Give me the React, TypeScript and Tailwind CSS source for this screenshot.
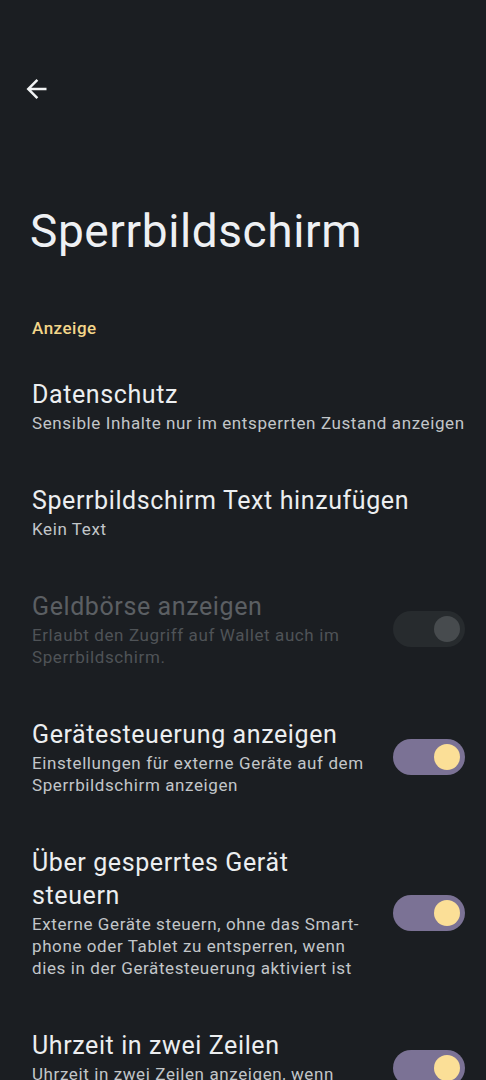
import React from 'react';

type Item = {
  title: string;
  summary: string;
  toggle?: 'on' | 'off';
  disabled?: boolean;
};

const items: Item[] = [
  { title: 'Datenschutz', summary: 'Sensible Inhalte nur im entsperrten Zustand anzeigen' },
  { title: 'Sperrbildschirm Text hinzufügen', summary: 'Kein Text' },
  {
    title: 'Geldbörse anzeigen',
    summary: 'Erlaubt den Zugriff auf Wallet auch im Sperrbildschirm.',
    toggle: 'on',
    disabled: true,
  },
  {
    title: 'Gerätesteuerung anzeigen',
    summary: 'Einstellungen für externe Geräte auf dem Sperrbildschirm anzeigen',
    toggle: 'on',
  },
  {
    title: 'Über gesperrtes Gerät steuern',
    summary: 'Externe Geräte steuern, ohne das Smart\u00ADphone oder Tablet zu entsperren, wenn dies in der Gerätesteuerung aktiviert ist',
    toggle: 'on',
  },
  {
    title: 'Uhrzeit in zwei Zeilen',
    summary: 'Uhrzeit in zwei Zeilen anzeigen, wenn verfügbar',
    toggle: 'on',
  },
];

const Toggle = ({ disabled }: { disabled?: boolean }) => (
  <div
    className={`flex h-[36px] w-[72px] shrink-0 items-center justify-end rounded-full pr-[5px] ${
      disabled ? 'bg-[#272b2e]' : 'bg-[#7b7295]'
    }`}
  >
    <div className={`h-[26px] w-[26px] rounded-full ${disabled ? 'bg-[#474b4e]' : 'bg-[#fbdf97]'}`} />
  </div>
);

const App = () => {
  return (
    <div
      className="min-h-screen bg-[#1b1e22] text-[#e6e8ea]"
      style={{ fontFamily: 'Roboto, "Open Sans", sans-serif' }}
    >
      <div className="pl-[26px] pt-[79px]">
        <svg width="21" height="20" viewBox="4 4 16 16" fill="#f1f3f4">
          <path d="M20 11H7.83l5.59-5.59L12 4l-8 8 8 8 1.41-1.41L7.83 13H20v-2z" />
        </svg>
      </div>

      <h1 className="mt-[104px] pl-[30px] text-[46px] font-normal leading-[56px] tracking-[0.6px] text-[#eef0f3]">
        Sperrbildschirm
      </h1>

      <div className="mt-[58px] pl-[32px] text-[17px] font-medium leading-[22px] tracking-[0.5px] text-[#f3d68a]">
        Anzeige
      </div>

      <div className="mt-[14px]">
        {items.map((item) => (
          <div key={item.title} className="flex items-center gap-[24px] pl-[32px] pr-[21px] py-[25px]">
            <div className="min-w-0 flex-1">
              <div
                className={`text-[25px] leading-[33px] tracking-[0.6px] ${
                  item.disabled ? 'text-[#5b5f63]' : 'text-[#eceef0]'
                }`}
              >
                {item.title}
              </div>
              <div
                className={`mt-[1px] text-[17px] leading-[22px] tracking-[0.6px] ${
                  item.disabled ? 'text-[#4f5357]' : 'text-[#c2c6c9]'
                }`}
                style={{ hyphens: 'manual' }}
              >
                {item.summary}
              </div>
            </div>
            {item.toggle && <Toggle disabled={item.disabled} />}
          </div>
        ))}
      </div>
    </div>
  );
};

export default App;
